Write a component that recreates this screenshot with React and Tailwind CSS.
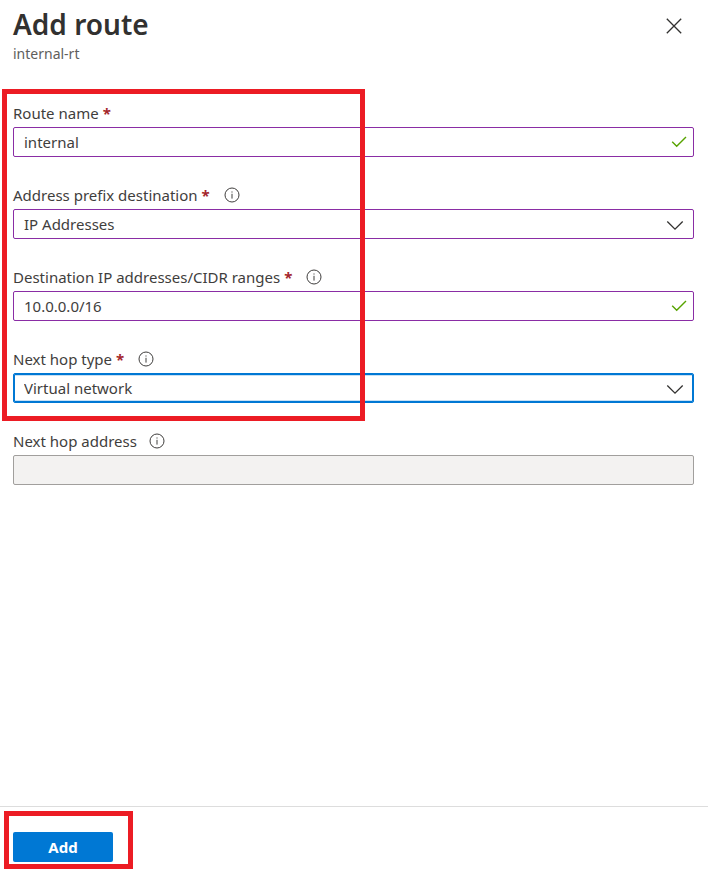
import React, { useState } from 'react';

const fieldBase = "block w-full h-[30px] px-[10px] text-[15px] leading-5 text-[#3f3e3d] border rounded-xs focus:outline-none";

const InfoIcon = () => (
  <svg className="w-4 h-4 ml-3 shrink-0" viewBox="0 0 16 16" fill="none" stroke="#3f3e3d" aria-hidden="true">
    <circle cx="8" cy="8" r="7" strokeWidth="1" />
    <path d="M8 6.8V11.6" strokeWidth="1" />
    <path d="M8 4.4V5.5" strokeWidth="1.1" />
  </svg>
);

const CheckIcon = () => (
  <svg className="absolute right-[7px] top-[7px] w-4 h-4 pointer-events-none" viewBox="0 0 16 16" fill="none" stroke="#57a300" strokeWidth="1.4" aria-hidden="true">
    <path d="M1.2 7.8L5.7 12.3L15 3" />
  </svg>
);

const ChevronIcon = () => (
  <svg className="absolute right-[10px] top-2 w-[18px] h-4 pointer-events-none" viewBox="0 0 18 16" fill="none" stroke="#323130" strokeWidth="1.3" aria-hidden="true">
    <path d="M1.3 4.5L9 12.2L16.7 4.5" />
  </svg>
);

const Field = ({ id, label, required, info, children }) => (
  <div>
    <div className="flex items-center h-6 mb-0.5">
      <label htmlFor={id} className="text-[15px] leading-6 text-[#3f3e3d]">
        {label}
        {required && <span className="ml-1 mr-0.5 font-bold text-[#a4262c]">*</span>}
      </label>
      {info && <InfoIcon />}
    </div>
    <div className="relative">{children}</div>
  </div>
);

const App = () => {
  const [routeName, setRouteName] = useState('internal');
  const [prefixType, setPrefixType] = useState('IP Addresses');
  const [ranges, setRanges] = useState('10.0.0.0/16');
  const [hopType, setHopType] = useState('Virtual network');

  const handleSubmit = (e) => {
    e.preventDefault();
  };

  return (
    <form
      onSubmit={handleSubmit}
      className="min-h-screen flex flex-col bg-white text-[#323130] font-['Noto_Sans','Open_Sans',sans-serif]"
    >
      <header className="flex items-start justify-between pl-[13px] pr-6 pt-1">
        <div>
          <h1 className="text-[28px] leading-10 font-semibold">Add route</h1>
          <p className="text-sm leading-5 text-[#605e5c]">internal-rt</p>
        </div>
        <button type="button" aria-label="Close" className="mt-3 p-0.5">
          <svg className="w-4 h-4" viewBox="0 0 16 16" fill="none" stroke="#323130" strokeWidth="1.3" aria-hidden="true">
            <path d="M0.8 0.8L15.2 15.2M15.2 0.8L0.8 15.2" />
          </svg>
        </button>
      </header>

      <main className="flex-1 flex flex-col gap-[26px] pl-[13px] pr-[14px] pt-[37px] pb-6">
        <div className="relative flex flex-col gap-[26px]">
          <Field id="route-name" label="Route name" required>
            <input
              id="route-name"
              type="text"
              value={routeName}
              onChange={(e) => setRouteName(e.target.value)}
              className={`${fieldBase} bg-white border-[#8a2da5]`}
            />
            <CheckIcon />
          </Field>

          <Field id="prefix-type" label="Address prefix destination" required info>
            <select
              id="prefix-type"
              value={prefixType}
              onChange={(e) => setPrefixType(e.target.value)}
              className={`${fieldBase} appearance-none bg-white border-[#8a2da5]`}
            >
              <option>IP Addresses</option>
              <option>Service Tag</option>
            </select>
            <ChevronIcon />
          </Field>

          <Field id="ranges" label="Destination IP addresses/CIDR ranges" required info>
            <input
              id="ranges"
              type="text"
              value={ranges}
              onChange={(e) => setRanges(e.target.value)}
              className={`${fieldBase} bg-white border-[#8a2da5]`}
            />
            <CheckIcon />
          </Field>

          <Field id="hop-type" label="Next hop type" required info>
            <select
              id="hop-type"
              value={hopType}
              onChange={(e) => setHopType(e.target.value)}
              className={`${fieldBase} appearance-none bg-white border-[#0078d4] shadow-[inset_0_0_0_1px_#0078d4,inset_0_2px_0_#c7e0f4,inset_0_-2px_0_#c7e0f4]`}
            >
              <option>Virtual network</option>
              <option>Virtual network gateway</option>
              <option>Internet</option>
              <option>Virtual appliance</option>
              <option>None</option>
            </select>
            <ChevronIcon />
          </Field>

          {/* Highlight over the required fields */}
          <div className="absolute -left-[11px] -top-3 -bottom-[18px] w-[363px] border-5 border-[#ec1c24] pointer-events-none" />
        </div>

        <Field id="hop-address" label="Next hop address" info>
          <input
            id="hop-address"
            type="text"
            disabled
            className={`${fieldBase} bg-[#f3f2f1] border-[#a19f9d]`}
          />
        </Field>
      </main>

      <footer className="border-t border-[#dddddd] pl-[13px] pt-[25px] pb-3">
        <div className="relative inline-block align-top">
          <button
            type="submit"
            className="block w-[100px] h-[30px] rounded-xs bg-[#0078d4] text-[15px] leading-5 font-bold text-white hover:bg-[#106ebe]"
          >
            Add
          </button>
          <div className="absolute -left-[9px] -right-5 -top-[21px] -bottom-[7px] border-5 border-[#ec1c24] pointer-events-none" />
        </div>
      </footer>
    </form>
  );
};

export default App;
